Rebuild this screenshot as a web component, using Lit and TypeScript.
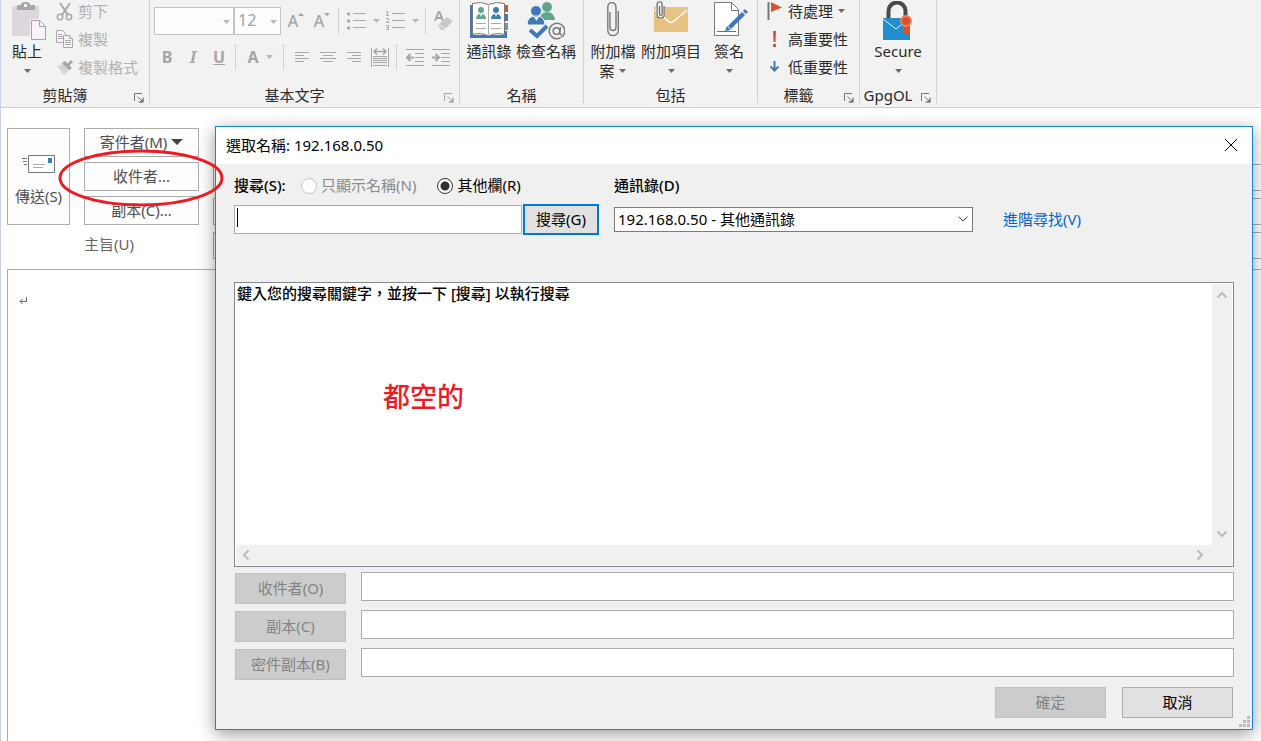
import { LitElement, html, css, svg } from "lit";
import { customElement } from "lit/decorators.js";

const caret = html`<svg class="caret" width="9" height="4" viewBox="0 0 9 4"><path d="M1 0h7L4.500 4z" fill="currentColor"/></svg>`;
const launcher = html`<svg width="10" height="10" viewBox="0 0 10 10" fill="none" stroke="currentColor"><path d="M.5 8V.5H8M3.500 3.500l4 4M9 4.500V9H4.500"/><path d="M9.500 5v4.500H5z" fill="currentColor" stroke="none"/></svg>`;

const I = (w: number, h: number, body: unknown) =>
  html`<svg width=${w} height=${h} viewBox="0 0 ${w} ${h}" fill="none" aria-hidden="true">${body}</svg>`;

const icons = {
  paste: I(39, 41, svg`<g transform="translate(4 0)"><path d="M0 5h27v30H0z" fill="#dcd7dc"/><path d="M5 4h4V2h2V1h5v1h2v2h5v5H5z" fill="#a7a7a7"/><path d="M12 3h3v3h-3z" fill="#f2f2f2"/><path d="M18 18h9.500l8 7v14.500H18z" fill="#f2f2f2"/><path d="M19.500 19.500h8l6 6v13h-14z" fill="#f8f2fb" stroke="#a7a2aa"/><path d="M27.500 19.500v6h6" stroke="#a7a2aa"/></g>`),
  cut: I(18, 19, svg`<g stroke="#a9a9a9" stroke-width="2"><path d="M4 1l8 12M14 1L6 13"/><circle cx="4" cy="15" r="2.700" stroke-width="1.500"/><circle cx="13" cy="15" r="2.700" stroke-width="1.500"/></g>`),
  copy: I(18, 18, svg`<g stroke="#aaa5aa" fill="#f7f3f8"><path d="M.5.5h6l3 3v9h-9z"/><path d="M2 4.500h4M2 6.500h5M2 8.500h5"/><path d="M7.500 5.500h6l3 3v9h-9z"/><path d="M13.500 5.500v3h3M9 10.500h6M9 12.500h6M9 14.500h6"/></g>`),
  brush: I(18, 16, svg`<path d="M1 7l6-2 6 6-5 5z" fill="#d8d3d8"/><path d="M6 4l3-2 7 7-3 2z" fill="#a5a5a5"/><path d="M11 5l4-4 2 2-4 4z" fill="#a5a5a5"/>`),
  bullets: I(19, 18, svg`<g fill="#a9a9a9"><path d="M0 1h3v2H0zM1 0h1v4H1zM0 8h3v2H0zM1 7h1v4H1zM0 15h3v2H0zM1 14h1v4H1z"/><path d="M6 1h13v1H6zM6 8h13v1H6zM6 15h13v1H6z"/></g>`),
  numbers: I(20, 20, svg`<g stroke="#a9a9a9"><path d="M7 2.500h13M7 9.500h13M7 16.500h13"/><path d="M1 .5h1.500V4M1 4.500h3M1 7.500h2.500v2L1 11.500h3M1 14.500h2.500v4H1M1.500 16.500h2"/></g>`),
  eraser: I(20, 20, svg`<path d="M1 10L4.500 1h1L9 10M3 7h5" stroke="#a6a6a6" stroke-width="2"/><path d="M4 14l9-8 6 4-9 9H7z" fill="#c9c5ca"/><path d="M5 13l6 5" stroke="#f2f2f2"/>`),
  left: I(14, 12, svg`<path d="M0 1.500h14M0 4.500h9M0 7.500h14M0 10.500h9" stroke="#a6a6a6"/>`),
  center: I(16, 12, svg`<path d="M0 1.500h16M3 4.500h10M0 7.500h16M3 10.500h10" stroke="#a6a6a6"/>`),
  right: I(14, 12, svg`<path d="M0 1.500h14M5 4.500h9M0 7.500h14M5 10.500h9" stroke="#a6a6a6"/>`),
  justify: I(18, 19, svg`<path d="M.5 0v19M17.500 0v19M2 8.500h14M2 10.500h14M2 12.500h14M2 14.500h14M2 17.500h14" stroke="#a6a6a6"/><path d="M3 3.500h12M6 .5l-3 3 3 3M12 .5l3 3-3 3" stroke="#a6a6a6" stroke-width="1.500"/>`),
  outdent: I(18, 17, svg`<path d="M0 .5h18M9 4.500h9M9 8.500h9M9 12.500h9M0 16.500h18" stroke="#a6a6a6"/><path d="M8 8.500H1M4.500 5L1 8.500 4.500 12" stroke="#a6a6a6" stroke-width="2"/>`),
  indent: I(18, 17, svg`<path d="M0 .5h18M9 4.500h9M9 8.500h9M9 12.500h9M0 16.500h18" stroke="#a6a6a6"/><path d="M0 8.500h7M3.500 5L7 8.500 3.500 12" stroke="#a6a6a6" stroke-width="2"/>`),
  book: I(38, 38, svg`<path d="M0 4h3v30h32v3H0z" fill="#4079b8"/><path d="M34 4h4v7h-4z" fill="#d9532c"/><path d="M34 13h4v7h-4z" fill="#4079b8"/><path d="M34 22h4v7h-4z" fill="#63a58c"/><path d="M34 30h3v7h-3z" fill="#4079b8"/><path d="M2.500 2.500Q11 0 18.500 3.500 26 0 34.500 2.500v31Q26 31 18.500 35 11 31 2.500 33.500z" fill="#fff" stroke="#777"/><path d="M18.500 3v31" stroke="#aaa"/><circle cx="11" cy="9" r="3" fill="#63a58c"/><path d="M6 18q0-5 5-5t5 5z" fill="#63a58c"/><circle cx="26" cy="9" r="3" fill="#4079b8"/><path d="M21 18q0-5 5-5t5 5z" fill="#4079b8"/><path d="M10 13l1 3 1-3zM25 13l1 3 1-3z" fill="#fff"/><path d="M6 22.500h10M6 27.500h10M21 22.500h10M21 27.500h10" stroke="#aaa"/>`),
  check: I(38, 39, svg`<g fill="#63a58c"><circle cx="20" cy="6" r="5"/><path d="M13 19q0-8 7-8t8 8z"/></g><g stroke="#f2f2f2"><circle cx="9" cy="10" r="5.500" fill="#4079b8"/><path d="M0 24q0-9 9-9t9 9z" fill="#4079b8"/></g><path d="M7 16l2.500 4 2.500-4z" fill="#f2f2f2"/><path d="M3 29l7 6L20 25" stroke="#4079b8" stroke-width="4"/><circle cx="30" cy="30" r="7.800" fill="#f2f2f2" stroke="#777" stroke-width="1.500"/><circle cx="29.500" cy="30" r="3.300" stroke="#777" stroke-width="1.500"/><path d="M33.500 26l-.8 5.500q0 2.500 2.500 2" stroke="#777" stroke-width="1.500"/><path d="M33 37l6-2v4h-6z" fill="#f2f2f2"/>`),
  clip: I(12, 36, svg`<path d="M3 11v15.500a3 3 0 0 0 6 0V6.500C9 0 .8 0 .8 6.500v22.500c0 7.500 10.500 7.500 10.500 0V10" stroke="#777" stroke-width="1.400"/>`),
  item: I(36, 32, svg`<path d="M1 6h34v25H1z" fill="#e8c283"/><path d="M2 9l13 11q3 3 6 0L34 9" stroke="#fff" stroke-width="1.500"/><path d="M3 0h9v12q0 5-4.500 5T3 12z" fill="#f7f3ee"/><path d="M6.500 5v8a1.300 1.300 0 0 0 2.600 0V3c0-3-5-3-5 0v11c0 4 7 4 7 0V5" stroke="#666" stroke-width="1.200"/>`),
  sign: I(38, 35, svg`<g transform="translate(4 0)"><path d="M.5 1.500h17l7 7v26H.5z" fill="#fff" stroke="#777"/><path d="M17.500 1.500v8h7" stroke="#777"/><path d="M14 25L28 11l3 3-14 14z" fill="#4079b8"/><path d="M13 25l4 4-6 1z" fill="#4079b8"/><path d="M29 10l2-2 3 3-2 2z" fill="#4079b8"/><path d="M3 30.500h19" stroke="#4079b8"/></g>`),
  flag: I(15, 18, svg`<path d="M1.500 0v18" stroke="#777" stroke-width="2"/><path d="M4 0l11 5.500L4 10z" fill="#d9532c"/>`),
  high: I(15, 18, svg`<path d="M6 1h3L8.500 12h-2zM6 14h3v3H6z" fill="#d9532c"/>`),
  low: I(15, 18, svg`<path d="M7.500 3v9M3.500 8.500l4 4 4-4" stroke="#4079b8" stroke-width="2"/>`),
  secure: I(30, 40, svg`<path d="M5.500 17V10a8.500 8.500 0 0 1 17 0v7" stroke="#4a4a48" stroke-width="4"/><path d="M0 17h27v22H0z" fill="#1f8fd0"/><path d="M0 18l13 10 10-8" stroke="#e8f3fa"/><path d="M20 24h6v10l-3-2-3 2z" fill="#d9532c"/><circle cx="23" cy="20" r="5" fill="#d9532c" stroke="#f08060" stroke-width="2"/>`),
  send: I(34, 20, svg`<path d="M6.500 1.500h26v17h-26z" fill="#fff" stroke="#777"/><path d="M26 4h4v5h-4z" fill="#4079b8"/><path d="M11 10.500h12M11 13.500h10" stroke="#aaa"/><path d="M0 4.500h5M1 7.500h4M2 10.500h3" stroke="#777"/>`),
};

const large = (icon: unknown, lines: unknown[], cls = "") => html`
  <button class="large ${cls}"><span class="pic">${icon}</span>${lines.map((l) => html`<span class="line">${l}</span>`)}</button>`;
const small = (icon: unknown, text: string, arrow: unknown = "") => html`
  <button class="small"><span class="mini">${icon}</span>${text}${arrow}</button>`;
const foot = (label: string, corner = true) => html`
  <div class="foot"><span class="name">${label}</span>${corner ? html`<button class="launch" aria-label="${label}">${launcher}</button>` : ""}</div>`;

@customElement("mail-ribbon")
export class MailRibbon extends LitElement {
  static styles = css`
    :host { display: flex; background: #f2f2f2; border-bottom: 1px solid #cfcfcf; padding-bottom: 4px; color: #2b2b2b; }
    button { font: inherit; color: inherit; background: none; border: 0; padding: 0; }
    svg { display: block; flex: none; }
    .group { display: flex; flex-direction: column; border-right: 1px solid #cfcfcf; height: 103px; box-sizing: border-box; flex: none; }
    .body { flex: 1; display: flex; }
    .foot { display: flex; height: 16px; line-height: 16px; }
    .name { flex: 1; text-align: center; }
    .launch { width: 20px; display: flex; align-items: center; justify-content: flex-start; padding: 5px 0 0 5px; color: #777; box-sizing: border-box; }
    .large { display: flex; flex-direction: column; align-items: center; min-width: 48px; }
    .pic { height: 41px; display: flex; align-items: flex-start; justify-content: center; padding-top: 1px; box-sizing: border-box; }
    .line { height: 20px; line-height: 20px; display: flex; align-items: center; gap: 3px; white-space: nowrap; }
    .caret { color: #6a6a6a; }
    .stack { display: flex; flex-direction: column; gap: 6px; }
    .small { display: flex; align-items: center; gap: 4px; height: 22px; line-height: 22px; white-space: nowrap; }
    .mini { width: 18px; display: flex; }
    .dim { color: #b1b1b1; }
    .clipboard { width: 149px; }
    .clipboard .large { width: 52px; margin-right: 3px; }
    .text { width: 310px; }
    .text .body { flex-direction: column; padding: 7px 0 0 4px; gap: 8px; }
    .text .launch, .text button { color: #a6a6a6; }
    .text .caret { color: #b8b8b8; }
    .people { width: 124px; }
    .include { width: 174px; }
    .people .body { padding-left: 5px; gap: 3px; }
    .include .body { padding-left: 5px; gap: 4px; }
    .tags { width: 102px; }
    .tags .stack { padding-left: 9px; }
    .tags .mini { width: 17px; }
    .gpg { width: 77px; }
    .gpg .body { justify-content: center; }
    .tools { display: flex; align-items: center; height: 28px; }
    .tools button { width: 26px; height: 26px; display: flex; align-items: center; justify-content: center; flex: none; }
    .tools .split { width: 39px; gap: 6px; }
    .rule { width: 1px; height: 26px; background: #cfcfcf; margin: 0 5px 0 3px; flex: none; }
    .pick { position: relative; height: 28px; flex: none; }
    .pick select { appearance: none; width: 100%; height: 100%; box-sizing: border-box; border: 1px solid #c3c3c3; border-radius: 0; background: #fdfdfd; font: inherit; font-size: 16px; color: #a0a0a0; padding: 0 3px 2px; opacity: 1; }
    .pick svg { position: absolute; right: 3px; top: 13px; }
    .face { width: 80px; }
    .size { width: 47px; margin-right: 2px; }
    .glyph { font-weight: 700; font-size: 16px; }
    .letter { font-weight: 500; font-size: 16px; }
    .slant { font-family: "Noto Serif", "Liberation Serif", serif; font-style: italic; }
    .under { text-decoration: underline; }
  `;
  render() {
    return html`
      <section class="group clipboard">
        <div class="body">
          ${large(icons.paste, ["貼上", caret])}
          <div class="stack dim">${small(icons.cut, "剪下")}${small(icons.copy, "複製")}${small(icons.brush, "複製格式")}</div>
        </div>
        ${foot("剪貼簿")}
      </section>
      <section class="group text">
        <div class="body">
          <div class="tools">
            <span class="pick face"><select aria-label="字型" disabled><option></option></select>${caret}</span>
            <span class="pick size"><select aria-label="字型大小" disabled><option>12</option></select>${caret}</span>
            <button class="letter" aria-label="放大字型">A${I(6, 16, svg`<path d="M0 3l3-3 3 3z" fill="#a6a6a6"/>`)}</button>
            <button class="letter" aria-label="縮小字型">A${I(6, 16, svg`<path d="M0 0h6L3 3z" fill="#a6a6a6"/>`)}</button>
            <span class="rule"></span>
            <button class="split" aria-label="項目符號">${icons.bullets}${caret}</button>
            <button class="split" aria-label="編號">${icons.numbers}${caret}</button>
            <span class="rule"></span>
            <button aria-label="清除格式">${icons.eraser}</button>
          </div>
          <div class="tools">
            <button class="glyph">B</button><button class="glyph slant">I</button><button class="glyph under">U</button>
            <span class="rule"></span>
            <button class="split glyph">A${caret}</button>
            <span class="rule"></span>
            <button aria-label="靠左">${icons.left}</button><button aria-label="置中">${icons.center}</button><button aria-label="靠右">${icons.right}</button><button aria-label="分散">${icons.justify}</button>
            <span class="rule"></span>
            <button aria-label="減少縮排">${icons.outdent}</button><button aria-label="增加縮排">${icons.indent}</button>
          </div>
        </div>
        ${foot("基本文字")}
      </section>
      <section class="group people">
        <div class="body">${large(icons.book, ["通訊錄"])}${large(icons.check, ["檢查名稱"])}</div>
        ${foot("名稱", false)}
      </section>
      <section class="group include">
        <div class="body">
          ${large(icons.clip, ["附加檔", html`案${caret}`])}${large(icons.item, ["附加項目", caret])}${large(icons.sign, ["簽名", caret])}
        </div>
        ${foot("包括", false)}
      </section>
      <section class="group tags">
        <div class="body"><div class="stack">${small(icons.flag, "待處理", caret)}${small(icons.high, "高重要性")}${small(icons.low, "低重要性")}</div></div>
        ${foot("標籤")}
      </section>
      <section class="group gpg">
        <div class="body">${large(icons.secure, ["Secure", caret])}</div>
        ${foot("GpgOL")}
      </section>`;
  }
}

@customElement("compose-form")
export class ComposeForm extends LitElement {
  static styles = css`
    :host { display: flex; flex-direction: column; flex: 1; padding: 20px 0 0 6px; color: #666; }
    .head { display: grid; grid-template-columns: 63px 115px 1fr; grid-auto-rows: 29px; gap: 5px 14px; }
    button { font: inherit; color: #505050; background: #fdfdfd; border: 1px solid #ababab; padding: 0 0 2px; display: flex; align-items: center; justify-content: center; gap: 4px; }
    .send { grid-row: 1 / 4; flex-direction: column; gap: 12px; padding-top: 8px; }
    .to, .cc, .from { grid-column: 2; }
    input { grid-column: 3; align-self: end; height: 27px; box-sizing: border-box; border: 1px solid #ababab; border-right: 0; background: #fff; font: inherit; min-width: 0; padding: 0 4px; }
    label { grid-column: 2; align-self: center; line-height: 20px; padding-bottom: 2px; }
    .page { flex: 1; margin-top: 10px; border: solid #ababab; border-width: 1px 0 0 1px; padding: 27px 11px; }
    .page svg { display: block; }
  `;
  render() {
    return html`
      <div class="head">
        <button class="send">${icons.send}<span>傳送(S)</span></button>
        <button class="from">寄件者(M)<svg width="12" height="6" viewBox="0 0 12 6"><path d="M0 0h12L6 6z" fill="#444"/></svg></button>
        <button class="to">收件者...</button><input aria-label="收件者" />
        <button class="cc">副本(C)...</button><input aria-label="副本" />
        <label for="subject">主旨(U)</label><input id="subject" />
      </div>
      <div class="page"><svg width="8" height="8" viewBox="0 0 8 8" fill="none" stroke="#666"><path d="M7.500 0v4.500H1M3.500 2L1 4.500 3.500 7"/></svg></div>`;
  }
}

const chevron = (d: string) => html`<svg width="12" height="12" viewBox="0 0 12 12" fill="none" stroke="#bcbcbc" stroke-width="2"><path d=${d}/></svg>`;

@customElement("name-dialog")
export class NameDialog extends LitElement {
  static styles = css`
    :host { display: block; background: #f0f0f0; border: 1px solid #1883d7; box-shadow: 0 4px 16px rgba(0, 0, 0, 0.4); color: #000; }
    header { display: flex; align-items: center; justify-content: space-between; height: 37px; box-sizing: border-box; background: #fff; padding: 0 15px 2px 10px; }
    button, input, select { font: inherit; box-sizing: border-box; border-radius: 0; }
    svg { display: block; }
    .close { background: none; border: 0; padding: 0; }
    main { padding: 12px 18px 11px; }
    .query { display: grid; grid-template-columns: 365px 359px auto; grid-template-rows: 20px 31px; justify-content: start; column-gap: 15px; row-gap: 8px; align-items: center; }
    .kinds { display: flex; align-items: center; line-height: 20px; }
    label, .strong, a { padding-bottom: 2px; }
    .strong { font-weight: 500; line-height: 20px; }
    .kinds .strong { width: 67px; }
    .kinds label { margin: 0 21px 0 4px; }
    .kinds .off { color: #8a8a8a; }
    input[type="radio"] { appearance: none; width: 16px; height: 16px; margin: 0; border: 1px solid #333; border-radius: 50%; background: #fff; }
    input[type="radio"]:disabled { border-color: #c4c4c4; }
    input[type="radio"]:checked { background: radial-gradient(circle, #333 4px, #fff 5px); }
    .find { display: flex; align-items: center; gap: 1px; position: relative; }
    .find input, .row input { flex: 1; min-width: 0; height: 29px; border: 1px solid #ababab; background: #fff; padding: 0 4px; }
    .beam { position: absolute; left: 3px; top: 4px; width: 1px; height: 19px; background: #000; }
    .go { width: 76px; height: 31px; border: 2px solid #0078d7; background: #e1e1e1; padding: 0 0 2px; }
    .book { position: relative; }
    .book select { appearance: none; display: block; width: 100%; height: 25px; border: 1px solid #7a7a7a; background: #fff; color: #000; padding: 0 3px 2px; }
    .book svg { position: absolute; right: 5px; top: 9px; }
    a { color: #0066cc; text-decoration: none; margin-left: 15px; line-height: 20px; }
    .results { margin-top: 47px; height: 285px; box-sizing: border-box; border: 1px solid #828790; background: #fff; padding: 1px; display: grid; grid-template-columns: 1fr 20px; grid-template-rows: 1fr 20px; }
    .list { line-height: 18px; padding-left: 1px; position: relative; font-weight: 500; }
    .note { position: absolute; left: 147px; top: 93px; font-size: 27px; line-height: 40px; color: #ed1c24; }
    .vbar, .hbar { background: #f0f0f0; display: flex; justify-content: space-between; align-items: center; }
    .vbar { flex-direction: column; padding: 5px 0; }
    .hbar { grid-column: 1 / 3; padding: 0 26px 0 4px; }
    .rows { display: flex; flex-direction: column; gap: 6px; padding: 5px 0 0 1px; }
    .row { display: flex; gap: 15px; align-items: flex-start; }
    .plain { width: 111px; height: 31px; border: 1px solid #adadad; background: #e1e1e1; color: #000; padding: 0 0 2px; }
    .plain:disabled { background: #ccc; border-color: #bfbfbf; color: #838383; }
    .row .plain { margin-top: 1px; }
    footer { display: flex; justify-content: flex-end; gap: 16px; padding: 7px 1px 0 0; }
    .grip { position: absolute; right: 2px; bottom: 2px; }
  `;
  render() {
    const row = (id: string, text: string) => html`
      <div class="row"><button class="plain" disabled>${text}</button><input aria-label=${text} id=${id} /></div>`;
    return html`
      <header><span>選取名稱: 192.168.0.50</span>
        <button class="close" aria-label="關閉"><svg width="12" height="12" viewBox="0 0 12 12" stroke="#000"><path d="M0 0l12 12M12 0L0 12"/></svg></button>
      </header>
      <main>
        <div class="query">
          <div class="kinds"><span class="strong">搜尋(S):</span>
            <input type="radio" name="kind" id="names" disabled /><label class="off" for="names">只顯示名稱(N)</label>
            <input type="radio" name="kind" id="more" checked /><label for="more">其他欄(R)</label>
          </div>
          <label class="strong" for="source">通訊錄(D)</label><span></span>
          <div class="find"><input aria-label="搜尋" /><span class="beam"></span><button class="go">搜尋(G)</button></div>
          <div class="book"><select id="source"><option>192.168.0.50 - 其他通訊錄</option></select>
            <svg width="10" height="6" viewBox="0 0 10 6" fill="none" stroke="#444"><path d="M.5.5L5 5 9.500.5"/></svg></div>
          <a href="#">進階尋找(V)</a>
        </div>
        <div class="results">
          <div class="list">鍵入您的搜尋關鍵字，並按一下 [搜尋] 以執行搜尋<span class="note">都空的</span></div>
          <div class="vbar">${chevron("M1.500 8.500L6 4l4.500 4.500")}${chevron("M1.500 3.500L6 8l4.500-4.500")}</div>
          <div class="hbar">${chevron("M8.500 1.500L4 6l4.500 4.500")}${chevron("M3.500 1.500L8 6l-4.500 4.500")}</div>
        </div>
        <div class="rows">${row("to", "收件者(O)")}${row("cc", "副本(C)")}${row("bcc", "密件副本(B)")}</div>
        <footer><button class="plain" disabled>確定</button><button class="plain">取消</button></footer>
      </main>
      <svg class="grip" width="11" height="11" viewBox="0 0 11 11" fill="#bcbcbc"><path d="M8 0h3v3H8zM4 4h3v3H4zM8 4h3v3H8zM0 8h3v3H0zM4 8h3v3H4zM8 8h3v3H8z"/></svg>`;
  }
}

@customElement("app-root")
export class AppRoot extends LitElement {
  static styles = css`
    :host { display: flex; flex-direction: column; position: relative; min-height: 100vh; box-sizing: border-box; overflow: hidden; border-left: 1px solid #c5d0e6; background: #fff; font: 15px/20px "Noto Sans", "Noto Sans CJK TC", sans-serif; }
    name-dialog { position: absolute; left: 214px; right: 8px; top: 126px; }
    .ring { position: absolute; left: 57px; top: 149px; }
  `;
  render() {
    return html`<mail-ribbon></mail-ribbon><compose-form></compose-form><name-dialog></name-dialog>
      <svg class="ring" width="166" height="58" viewBox="0 0 166 58" fill="none"><ellipse cx="83" cy="29" rx="81" ry="27" stroke="#ed1c24" stroke-width="3"/></svg>`;
  }
}
